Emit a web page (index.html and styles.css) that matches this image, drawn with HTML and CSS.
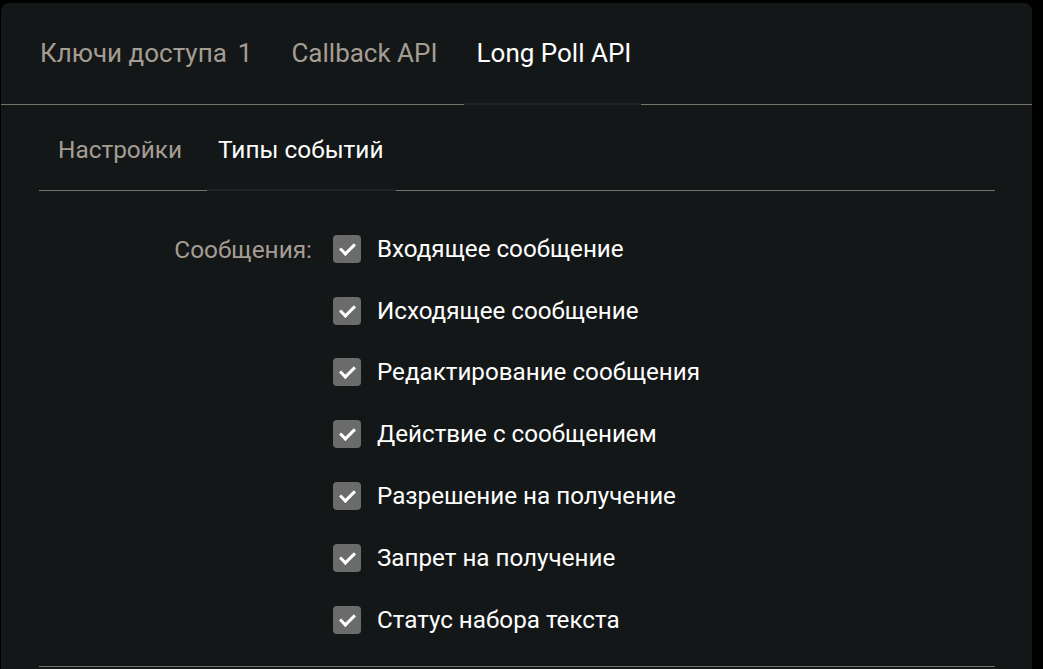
FILE: index.html
```html
<!DOCTYPE html>
<html lang="ru">
  <head>
    <meta charset="UTF-8" />
    <meta name="viewport" content="width=device-width, initial-scale=1" />
    <title>Long Poll API</title>
    <link rel="stylesheet" href="styles.css">
  </head>
  <body>
    <div class="card">
      <nav class="tabs">
        <a class="tab">Ключи доступа<span class="tab-count">1</span></a>
        <a class="tab">Callback API</a>
        <a class="tab tab-active">Long Poll API</a>
      </nav>

      <div class="section">
        <nav class="subtabs">
          <a class="subtab">Настройки</a>
          <a class="subtab subtab-active">Типы событий</a>
        </nav>

        <div class="events">
          <div class="events-label">Сообщения:</div>
          <ul class="events-list">
            <li class="event"><span class="check"></span>Входящее сообщение</li>
            <li class="event"><span class="check"></span>Исходящее сообщение</li>
            <li class="event"><span class="check"></span>Редактирование сообщения</li>
            <li class="event"><span class="check"></span>Действие с сообщением</li>
            <li class="event"><span class="check"></span>Разрешение на получение</li>
            <li class="event"><span class="check"></span>Запрет на получение</li>
            <li class="event"><span class="check"></span>Статус набора текста</li>
          </ul>
        </div>
      </div>
    </div>
  </body>
</html>
```

FILE: styles.css
```css
html,
body {
  margin: 0;
  padding: 0;
  height: 100%;
  overflow: hidden;
  background: #000;
  font-family: Roboto, "Noto Sans", sans-serif;
}
.card {
  margin: 3px 11px 0 1px;
  height: 720px;
  background: #141718;
  border-radius: 8px 8px 0 0;
}
.tabs {
  display: flex;
  gap: 16px;
  height: 101px;
  padding-left: 26px;
  border-bottom: 1px solid #77726a;
}
.tab {
  display: flex;
  align-items: center;
  padding: 0 10px 0 13px;
  margin-bottom: -1px;
  border-bottom: 2px solid transparent;
  font-size: 26px;
  color: #a59d93;
  cursor: pointer;
}
.tab-count {
  margin-left: 11px;
}
.tab-active {
  color: #fff;
  border-bottom-color: #202325;
}
.section {
  margin: 0 37px 0 38px;
}
.subtabs {
  display: flex;
  gap: 13px;
  height: 85px;
  padding-left: 8px;
  border-bottom: 1px solid #77726a;
}
.subtab {
  display: flex;
  align-items: center;
  padding: 4px 12px 0 11px;
  margin-bottom: -1px;
  border-bottom: 2px solid transparent;
  font-size: 24.4px;
  color: #a59d93;
  cursor: pointer;
}
.subtab-active {
  color: #fff;
  border-bottom-color: #202325;
}
.events {
  display: grid;
  grid-template-columns: 273px 1fr;
  column-gap: 21px;
  padding: 27px 0 15px;
  border-bottom: 1px solid #77726a;
}
.events-label {
  height: 62px;
  display: flex;
  align-items: center;
  justify-content: flex-end;
  font-size: 24.4px;
  color: #a59d93;
}
.events-list {
  list-style: none;
  margin: 0;
  padding: 0;
}
.event {
  display: flex;
  align-items: center;
  gap: 16px;
  height: 61.8px;
  font-size: 24.2px;
  color: #fff;
}
.check {
  position: relative;
  width: 28px;
  height: 28px;
  border-radius: 4px;
  background: #6b6b6b;
}
.check::after {
  content: "";
  position: absolute;
  left: 10px;
  top: 5px;
  width: 6px;
  height: 12px;
  border: solid #fff;
  border-width: 0 3px 3px 0;
  transform: rotate(45deg);
}
```
